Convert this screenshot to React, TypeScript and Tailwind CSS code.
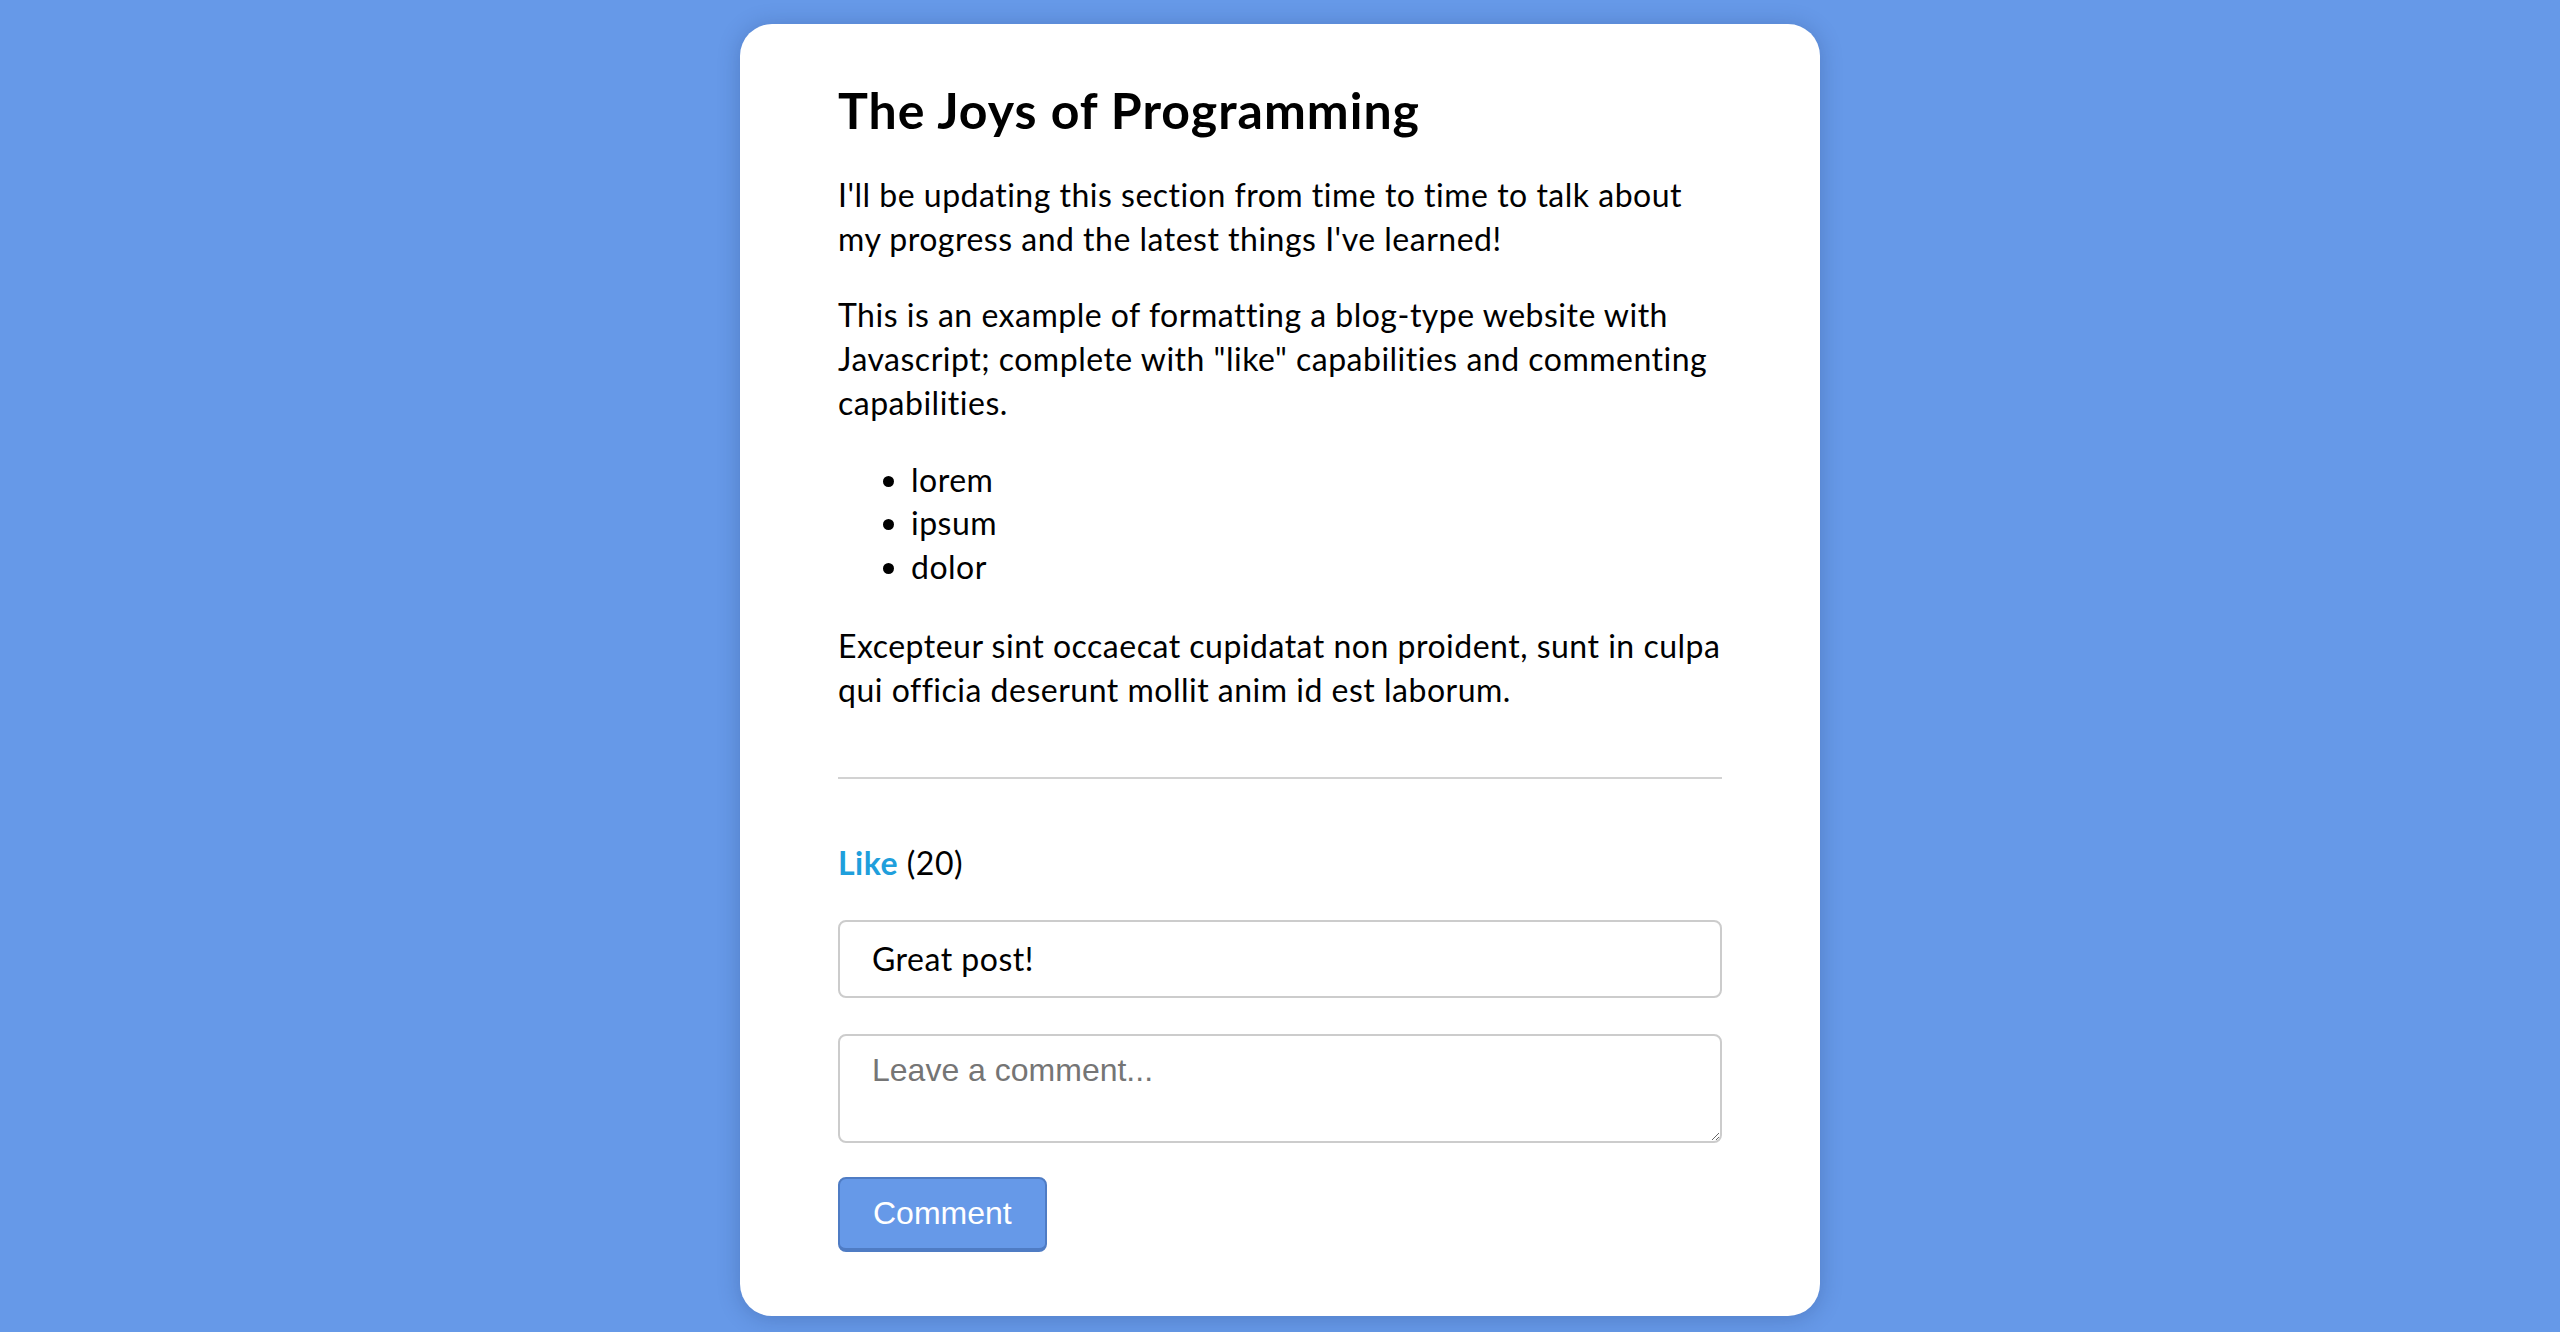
export default function App() {
    return (
        <div className="min-h-screen bg-[#6699e8] pt-6 pb-4 font-['Lato',sans-serif] text-black">
            <div className="mx-auto w-[1080px] rounded-[32px] bg-white px-[98px] pt-[54px] pb-[64px] shadow-[0_2px_22px_rgba(20,40,90,0.25)]">
                <h2 className="text-[50px] font-bold leading-[64px] tracking-[1px]">
                    The Joys of Programming
                </h2>

                <div className="mt-[31px] whitespace-nowrap text-[32px] leading-[43.7px] tracking-[0.5px]">
                    <p>
                        I'll be updating this section from time to time to talk about
                        <br />
                        my progress and the latest things I've learned!
                    </p>
                    <p className="mt-[33px]">
                        This is an example of formatting a blog-type website with
                        <br />
                        Javascript; complete with "like" capabilities and commenting
                        <br />
                        capabilities.
                    </p>
                    <ul className="mt-[33px] list-disc pl-[73px]">
                        <li>lorem</li>
                        <li>ipsum</li>
                        <li>dolor</li>
                    </ul>
                    <p className="mt-[35px] leading-[44px]">
                        Excepteur sint occaecat cupidatat non proident, sunt in culpa
                        <br />
                        qui officia deserunt mollit anim id est laborum.
                    </p>
                </div>

                <hr className="mt-[65px] border-t-2 border-[#d2d2d2]" />

                <div className="mt-[62px] text-[32px] leading-[44px] tracking-[0.5px]">
                    <span className="font-bold text-[#1f9fdc]">Like</span> (20)
                </div>

                <div className="mt-[35px] rounded-lg border-2 border-[#cccccc] px-8 py-4 text-[32px] leading-[42px] tracking-[0.5px]">
                    Great post!
                </div>

                <textarea
                    rows={2}
                    placeholder="Leave a comment..."
                    className="mt-[36px] block w-full rounded-lg border-2 border-[#cccccc] px-8 py-4 font-['Liberation_Sans',Arial,sans-serif] text-[32px] leading-[36.8px] placeholder:text-[#757575]"
                />

                <button className="mt-[34px] block rounded-lg border-2 border-b-4 border-[#4f7cc4] bg-[#6699e8] px-[33px] py-4 font-['Liberation_Sans',Arial,sans-serif] text-[32px] leading-[36.8px] text-white">
                    Comment
                </button>
            </div>
        </div>
    );
}
